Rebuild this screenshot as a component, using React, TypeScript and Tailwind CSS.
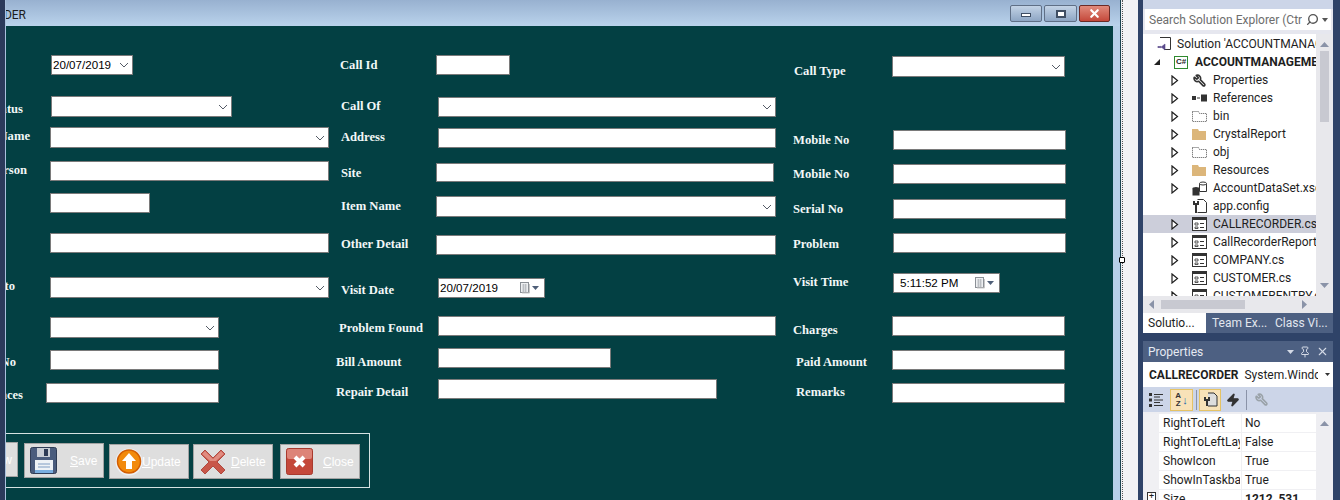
import type { ReactNode } from "react";
import { Pin, Search, Wrench, X, Zap } from "lucide-react";

const Chevron = () => (
  <svg width="10" height="6" viewBox="0 0 10 6" className="shrink-0">
    <path d="M1 1l4 4 4-4" fill="none" stroke="#555b66" strokeWidth="1" />
  </svg>
);

const CalIcon = () => (
  <svg width="21" height="12" viewBox="0 0 21 12" className="shrink-0">
    <rect x="0.5" y="0.5" width="8" height="10" fill="#eef0f2" stroke="#8b9096" />
    <path d="M2 3h5M2 5h5M2 7h5M2 9h5M3.5 2v8M5.500 2v8" stroke="#b4b8bc" strokeWidth="0.8" />
    <path d="M9.500 2v9H2" fill="none" stroke="#c8c8c8" />
    <path d="M12 4h7l-3.500 4z" fill="#4f5f78" />
  </svg>
);

function Input({ className }: { className: string }) {
  return <div className={`shrink-0 bg-white border border-[#7a7a7a] ${className}`} />;
}

function Combo({ className }: { className: string }) {
  return (
    <div className={`shrink-0 bg-white border border-[#7a7a7a] flex items-center justify-end pr-[3px] ${className}`}>
      <Chevron />
    </div>
  );
}

function DateBox({ text, className, children }: { text: string; className: string; children: ReactNode }) {
  return (
    <div className={`shrink-0 bg-white border border-[#7a7a7a] flex items-center justify-between pr-[3px] text-[11.6px] text-black font-['Liberation_Sans',sans-serif] ${className}`}>
      <span>{text}</span>
      {children}
    </div>
  );
}

function Field({ row, box, text, children }: { row: string; box: string; text: string; children: ReactNode }) {
  return (
    <div className={`flex items-start shrink-0 ${row}`}>
      <div className={`shrink-0 h-4 mb-[-20px] leading-4 whitespace-nowrap text-[12.6px] font-bold text-[#f2f7f7] font-['Liberation_Serif',serif] ${box}`}>
        {text}
      </div>
      {children}
    </div>
  );
}

function ClipLabel({ row, box, text, children }: { row: string; box: string; text: string; children: ReactNode }) {
  return (
    <div className={`flex items-start shrink-0 ${row}`}>
      <div className={`shrink-0 h-4 mb-[-20px] leading-4 flex justify-end whitespace-nowrap text-[12.6px] font-bold text-[#f2f7f7] font-['Liberation_Serif',serif] ${box}`}>
        <span className="shrink-0">{text}</span>
      </div>
      {children}
    </div>
  );
}

function ActionButton({ label, rest, icon, className, textClass }: { label: string; rest: string; icon: ReactNode; className: string; textClass: string }) {
  return (
    <div className={`shrink-0 w-[80px] h-[35px] bg-[#dedede] border border-[#a3a3a3] flex items-center text-[12px] text-white font-['Liberation_Sans',sans-serif] ${className}`}>
      {icon}
      <span className={textClass}>
        <span className="underline">{label}</span>
        {rest}
      </span>
    </div>
  );
}

const Floppy = () => (
  <svg width="27" height="27" viewBox="0 0 27 27" className="shrink-0 ml-[5px]">
    <rect x="0.5" y="0.5" width="26" height="26" rx="2" fill="#4a5c7d" stroke="#2f3c55" />
    <rect x="7" y="1" width="13" height="9" fill="#c9ced6" />
    <rect x="14" y="2" width="4" height="7" fill="#2c3a55" />
    <rect x="5" y="13" width="18" height="13" fill="#eef2f6" />
    <path d="M8 17h12M8 20h12" stroke="#7e9cc2" />
    <rect x="5" y="23" width="18" height="3" fill="#79aee0" />
  </svg>
);

const UpCircle = () => (
  <svg width="28" height="28" viewBox="0 0 28 28" className="shrink-0 ml-[5px] mr-[-1px]">
    <circle cx="14" cy="14" r="13.500" fill="#eef0f5" />
    <circle cx="14" cy="13.500" r="11.500" fill="#f28a0c" stroke="#d25e04" strokeWidth="1.500" />
    <path d="M14 5l7 8h-4v8h-6v-8H7z" fill="#fff" />
  </svg>
);

const RedX = () => (
  <svg width="26" height="26" viewBox="0 0 26 26" className="shrink-0 ml-[6px]">
    <path d="M5 1l8 8 8-8 4 4-8 8 8 8-4 4-8-8-8 8-4-4 8-8-8-8z" fill="#c8574a" stroke="#b04a40" />
    <path d="M5 2l8 8 8-8 3 3-8 7H10L2 5z" fill="#e08c80" />
  </svg>
);

const RedSquareX = () => (
  <svg width="27" height="27" viewBox="0 0 27 27" className="shrink-0 ml-[5px]">
    <rect x="0.5" y="0.5" width="26" height="26" rx="2" fill="#c4483a" stroke="#a83a2e" />
    <rect x="1" y="1" width="25" height="10" rx="2" fill="#dd8478" />
    <path d="M9 9l9 9M18 9l-9 9" stroke="#fff" strokeWidth="4" />
  </svg>
);

const Expander = () => (
  <svg width="8" height="11" viewBox="0 0 8 11" className="shrink-0">
    <path d="M1 1l5.500 4.500L1 10z" fill="#fff" stroke="#1e1e1e" strokeWidth="1.200" />
  </svg>
);

const FormFileIcon = () => (
  <svg width="15" height="14" viewBox="0 0 15 14" className="shrink-0">
    <rect x="0.5" y="0.5" width="14" height="13" fill="#fff" stroke="#333" />
    <rect x="1" y="1" width="13" height="2" fill="#333" />
    <path d="M3 6h3v2H3zM3 10h3v1.500H3z" fill="none" stroke="#333" strokeWidth="0.8" />
    <path d="M8 6.500h4M8 10.500h4" stroke="#333" />
  </svg>
);

const FolderIcon = () => (
  <svg width="15" height="12" viewBox="0 0 15 12" className="shrink-0">
    <path d="M0 1h6l1 2h7v9H0z" fill="#dcb67a" />
  </svg>
);

const DottedFolder = () => (
  <svg width="15" height="12" viewBox="0 0 15 12" className="shrink-0">
    <path d="M0.500 1.500h6l1 2h7v8H0.500z" fill="#fff" stroke="#555" strokeDasharray="1 1" />
  </svg>
);

const RefIcon = () => (
  <svg width="15" height="8" viewBox="0 0 15 8" className="shrink-0">
    <rect x="0" y="2" width="4" height="4" fill="#333" />
    <path d="M5 4h3" stroke="#333" />
    <rect x="9" y="0.5" width="6" height="7" fill="#333" />
  </svg>
);

const DataIcon = () => (
  <svg width="15" height="15" viewBox="0 0 15 15" className="shrink-0">
    <ellipse cx="4" cy="7.500" rx="3.500" ry="1.500" fill="#333" />
    <rect x="0.5" y="7.500" width="7" height="7" fill="#333" />
    <path d="M7.500 2.500v8h7v-8" fill="#fff" stroke="#333" />
    <ellipse cx="11" cy="2.500" rx="3.500" ry="1.500" fill="#fff" stroke="#333" />
  </svg>
);

const ConfigIcon = () => (
  <svg width="15" height="15" viewBox="0 0 15 15" className="shrink-0">
    <path d="M5.500 0.500h6l3 3v10h-9" fill="#fff" stroke="#333" />
    <path d="M1 2v4h2v8h2V6h2V2H5v2H3V2z" fill="#333" />
  </svg>
);

const tree = [
  { name: "Properties", icon: <Wrench size={13} strokeWidth={3} className="text-[#333] shrink-0 mx-[1px] -scale-x-100" /> },
  { name: "References", icon: <RefIcon /> },
  { name: "bin", icon: <DottedFolder /> },
  { name: "CrystalReport", icon: <FolderIcon /> },
  { name: "obj", icon: <DottedFolder /> },
  { name: "Resources", icon: <FolderIcon /> },
  { name: "AccountDataSet.xsd", icon: <DataIcon /> },
  { name: "app.config", icon: <ConfigIcon />, noArrow: true },
  { name: "CALLRECORDER.cs", icon: <FormFileIcon />, selected: true },
  { name: "CallRecorderReport.rpt", icon: <FormFileIcon /> },
  { name: "COMPANY.cs", icon: <FormFileIcon /> },
  { name: "CUSTOMER.cs", icon: <FormFileIcon /> },
  { name: "CUSTOMERENTRY.cs", icon: <FormFileIcon /> },
];

const props = [
  { name: "RightToLeft", value: "No" },
  { name: "RightToLeftLayout", value: "False" },
  { name: "ShowIcon", value: "True" },
  { name: "ShowInTaskbar", value: "True" },
];

export default function App() {
  return (
    <div className="flex w-[1340px] h-[500px] overflow-hidden bg-[#eeeef2]">
      <div className="w-[6px] shrink-0 bg-[#2b3a5b] border-r border-[#a9c0dc]" />

      {/* form designer window */}
      <div className="w-[1114px] shrink-0 flex flex-col">
        <div className="h-[26px] shrink-0 flex items-center justify-between bg-gradient-to-b from-[#98b1d0] to-[#bad3ec] pr-[10px]">
          <div className="w-[20px] mt-[4px] flex justify-end overflow-hidden text-[12px] text-[#1c1c1c] font-['Roboto',sans-serif]">
            <span className="shrink-0">CALLRECORDER</span>
          </div>
          <div className="flex gap-[2px] mt-[1px]">
            <div className="w-[32px] h-[17px] rounded-[2px] border border-[#5f6f86] bg-gradient-to-b from-[#c3d3e6] to-[#8ea6c4] flex items-center justify-center">
              <div className="w-[10px] h-[4px] mt-[3px] bg-white border border-[#3f4e63]" />
            </div>
            <div className="w-[33px] h-[17px] rounded-[2px] border border-[#5f6f86] bg-gradient-to-b from-[#c3d3e6] to-[#8ea6c4] flex items-center justify-center">
              <div className="w-[10px] h-[8px] bg-white border-2 border-[#3f4e63]" />
            </div>
            <div className="w-[31px] h-[17px] rounded-[2px] border border-[#6b2a26] bg-gradient-to-b from-[#e08a7c] to-[#c4473a] flex items-center justify-center">
              <X size={13} strokeWidth={4} className="text-white" />
            </div>
          </div>
        </div>

        <div className="flex-1 flex min-h-0">
          <div className="w-[1107px] shrink-0 bg-[#034043] flex overflow-hidden">
            <div className="w-[330px] shrink-0 flex flex-col">
              <div className="flex shrink-0 mt-[29px] ml-[45px]">
                <DateBox text="20/07/2019" className="w-[82px] h-[20px] pl-[1px]">
                  <Chevron />
                </DateBox>
              </div>
              <ClipLabel row="mt-[21px]" box="w-[17px] mt-[5px]" text="Status">
                <Combo className="ml-[28px] w-[181px] h-[21px]" />
              </ClipLabel>
              <ClipLabel row="mt-[10px]" box="w-[24px] mt-[1px]" text="Customer Name">
                <Combo className="ml-[20px] w-[279px] h-[21px]" />
              </ClipLabel>
              <ClipLabel row="mt-[13px]" box="w-[21px] mt-[1px]" text="Contact Person">
                <Input className="ml-[23px] w-[279px] h-[20px]" />
              </ClipLabel>
              <Input className="mt-[12px] ml-[44px] w-[100px] h-[20px]" />
              <Input className="mt-[20px] ml-[44px] w-[279px] h-[20px]" />
              <ClipLabel row="mt-[24px]" box="w-[9px] mt-[1px]" text="Assign to">
                <Combo className="ml-[35px] w-[279px] h-[21px]" />
              </ClipLabel>
              <Combo className="mt-[19px] ml-[44px] w-[169px] h-[21px]" />
              <ClipLabel row="mt-[12px]" box="w-[10px] mt-[4px]" text="Bill No">
                <Input className="ml-[34px] w-[169px] h-[20px]" />
              </ClipLabel>
              <ClipLabel row="mt-[13px]" box="w-[17px] mt-[4px]" text="Advances">
                <Input className="ml-[23px] w-[173px] h-[20px]" />
              </ClipLabel>

              <div className="shrink-0 mt-[30px] ml-[-76px] w-[440px] h-[55px] border border-[#d6e2e2] flex items-start pl-[7px]">
                <ActionButton label="N" rest="ew" icon={null} className="mt-[8px] justify-end pr-[5px]" textClass="" />
                <ActionButton label="S" rest="ave" icon={<Floppy />} className="mt-[9px] ml-[6px]" textClass="ml-[13px]" />
                <ActionButton label="U" rest="pdate" icon={<UpCircle />} className="mt-[10px] ml-[5px]" textClass="" />
                <ActionButton label="D" rest="elete" icon={<RedX />} className="mt-[10px] ml-[4px]" textClass="ml-[5px]" />
                <ActionButton label="C" rest="lose" icon={<RedSquareX />} className="mt-[10px] ml-[7px]" textClass="ml-[10px]" />
              </div>
            </div>

            <div className="w-[457px] shrink-0 flex flex-col">
              <Field row="mt-[29px]" box="w-[100px] pl-[4px] mt-[2px]" text="Call Id">
                <Input className="w-[74px] h-[20px]" />
              </Field>
              <Field row="mt-[22px]" box="w-[102px] pl-[5px] mt-[1px]" text="Call Of">
                <Combo className="w-[338px] h-[20px]" />
              </Field>
              <Field row="mt-[11px]" box="w-[102px] pl-[5px] mt-[1px]" text="Address">
                <Input className="w-[338px] h-[20px]" />
              </Field>
              <Field row="mt-[15px]" box="w-[100px] pl-[5px] mt-[2px]" text="Site">
                <Input className="w-[338px] h-[19px]" />
              </Field>
              <Field row="mt-[14px]" box="w-[100px] pl-[5px] mt-[2px]" text="Item Name">
                <Combo className="w-[340px] h-[21px]" />
              </Field>
              <Field row="mt-[18px]" box="w-[100px] pl-[5px] mt-[1px]" text="Other Detail">
                <Input className="w-[340px] h-[20px]" />
              </Field>
              <Field row="mt-[23px]" box="w-[102px] pl-[5px] mt-[4px]" text="Visit Date">
                <DateBox text="20/07/2019" className="w-[107px] h-[20px] pl-[1px]">
                  <CalIcon />
                </DateBox>
              </Field>
              <Field row="mt-[18px]" box="w-[102px] pl-[3px] mt-[4px]" text="Problem Found">
                <Input className="w-[338px] h-[20px]" />
              </Field>
              <Field row="mt-[12px]" box="w-[102px] mt-[6px]" text="Bill Amount">
                <Input className="w-[173px] h-[20px]" />
              </Field>
              <Field row="mt-[11px]" box="w-[102px] mt-[5px]" text="Repair Detail">
                <Input className="w-[279px] h-[20px]" />
              </Field>
            </div>

            <div className="flex-1 flex flex-col">
              <Field row="mt-[30px]" box="w-[99px] pl-[1px] mt-[7px]" text="Call Type">
                <Combo className="w-[173px] h-[21px]" />
              </Field>
              <Field row="mt-[53px]" box="w-[100px] mt-[2px]" text="Mobile No">
                <Input className="w-[173px] h-[20px]" />
              </Field>
              <Field row="mt-[14px]" box="w-[100px] mt-[2px]" text="Mobile No">
                <Input className="w-[173px] h-[20px]" />
              </Field>
              <Field row="mt-[15px]" box="w-[100px] mt-[2px]" text="Serial No">
                <Input className="w-[173px] h-[20px]" />
              </Field>
              <Field row="mt-[14px]" box="w-[100px] mt-[3px]" text="Problem">
                <Input className="w-[173px] h-[20px]" />
              </Field>
              <Field row="mt-[20px]" box="w-[100px] mt-[1px]" text="Visit Time">
                <DateBox text="5:11:52 PM" className="w-[107px] h-[20px] pl-[6px]">
                  <CalIcon />
                </DateBox>
              </Field>
              <Field row="mt-[23px]" box="w-[99px] mt-[6px]" text="Charges">
                <Input className="w-[173px] h-[20px]" />
              </Field>
              <Field row="mt-[14px]" box="w-[99px] pl-[3px] mt-[4px]" text="Paid Amount">
                <Input className="w-[173px] h-[20px]" />
              </Field>
              <Field row="mt-[13px]" box="w-[99px] pl-[3px] mt-[1px]" text="Remarks">
                <Input className="w-[173px] h-[20px]" />
              </Field>
            </div>
          </div>
          <div className="flex-1 bg-[#b6cfe8]" />
        </div>
      </div>

      {/* designer gutter */}
      <div className="relative w-[23px] shrink-0 flex">
        <div className="w-[1px] bg-[#1d4350]" />
        <div className="w-[16px] border-l border-dotted border-[#555] ml-[1px] bg-[#f2f2f5]" />
        <div className="flex-1 bg-[#2f4368]" />
        <div className="absolute left-[-1px] top-[257px] w-[6px] h-[6px] bg-white border border-black rounded-[1px]" />
      </div>

      {/* tool windows */}
      <div className="flex-1 flex flex-col bg-[#2f4368] pr-[7px] font-['Roboto',sans-serif] text-[12px] text-[#1e1e1e]">
        <div className="h-[333px] shrink-0 flex flex-col bg-[#e6e7ef]">
          <div className="h-[9px] shrink-0 bg-[#ccd5e8]" />
          <div className="h-[21px] shrink-0 mx-[2px] bg-white flex items-center justify-between pl-[4px] pr-[3px] text-[#6d6d6d] overflow-hidden">
            <span className="whitespace-nowrap w-[153px] overflow-hidden">Search Solution Explorer (Ctrl+;)</span>
            <div className="flex items-center gap-[3px] text-[#555]">
              <Search size={13} strokeWidth={2.5} className="-scale-x-100" />
              <svg width="6" height="4" viewBox="0 0 6 4"><path d="M0 0h6L3 4z" fill="#555" /></svg>
            </div>
          </div>
          <div className="flex-1 flex min-h-0 mt-[4px]">
            <div className="w-[173px] shrink-0 bg-white overflow-hidden pt-[1px] flex flex-col">
              <div className="h-[18px] shrink-0 flex items-center pl-[14px] whitespace-nowrap">
                <svg width="14" height="14" viewBox="0 0 14 14" className="shrink-0">
                  <path d="M3 0.500h10.500v12H7" fill="none" stroke="#333" />
                  <path d="M1 9l2 2 5-4v6l-5-4-2 2z" fill="#5a4a8c" stroke="#5a4a8c" strokeWidth="0.6" />
                </svg>
                <span className="ml-[6px]">Solution 'ACCOUNTMANAGEMENT'</span>
              </div>
              <div className="h-[18px] shrink-0 flex items-center pl-[11px] whitespace-nowrap">
                <svg width="6" height="6" viewBox="0 0 6 6" className="shrink-0"><path d="M6 0v6H0z" fill="#222" /></svg>
                <div className="ml-[14px] w-[14px] h-[13px] border border-[#2f8a2f] flex items-center justify-center text-[8px] font-bold leading-none font-['Liberation_Sans',sans-serif] shrink-0">C#</div>
                <span className="ml-[7px] font-bold">ACCOUNTMANAGEMENT</span>
              </div>
              {tree.map((it) => (
                <div key={it.name} className={`h-[18px] shrink-0 flex items-center pl-[28px] whitespace-nowrap ${it.selected ? "bg-[#ccceda]" : ""}`}>
                  <div className="w-[8px] shrink-0 flex">{it.noArrow ? null : <Expander />}</div>
                  <div className="w-[15px] ml-[13px] shrink-0 flex justify-center">{it.icon}</div>
                  <span className="ml-[6px]">{it.name}</span>
                </div>
              ))}
            </div>
            <div className="flex-1 flex flex-col items-center bg-[#e8e8ec] pt-[8px] pb-[8px]">
              <svg width="9" height="5" viewBox="0 0 9 5"><path d="M0 5l4.500-5L9 5z" fill="#8a93a8" /></svg>
              <div className="w-[9px] h-[71px] mt-[4px] bg-[#c8c9d1]" />
              <div className="flex-1" />
              <svg width="9" height="5" viewBox="0 0 9 5"><path d="M0 0l4.500 5L9 0z" fill="#8a93a8" /></svg>
            </div>
          </div>
          <div className="h-[17px] shrink-0 flex items-center bg-[#e8e8ec] px-[6px]">
            <svg width="5" height="9" viewBox="0 0 5 9"><path d="M5 0v9L0 4.500z" fill="#8a93a8" /></svg>
            <div className="w-[84px] h-[9px] ml-[7px] bg-[#c8c9d1]" />
            <div className="flex-1" />
            <svg width="5" height="9" viewBox="0 0 5 9" className="mr-[20px]"><path d="M0 0v9l5-4.500z" fill="#8a93a8" /></svg>
          </div>
          <div className="h-[20px] shrink-0 flex bg-[#4d6082] text-[#e2e6ee] whitespace-nowrap">
            <div className="w-[63px] bg-white text-[#1e1e1e] pl-[5px] leading-[20px]">Solutio...</div>
            <div className="ml-[6px] w-[63px] leading-[20px]">Team Ex...</div>
            <div className="leading-[20px]">Class Vi...</div>
          </div>
        </div>

        <div className="h-[8px] shrink-0" />

        <div className="flex-1 min-h-0 flex flex-col bg-[#eeeef2] overflow-hidden">
          <div className="h-[21px] shrink-0 bg-[#4d6082] flex items-center justify-between pl-[5px] pr-[4px] text-[#e6eaf2]">
            <span>Properties</span>
            <div className="flex items-center gap-[5px]">
              <svg width="7" height="4" viewBox="0 0 7 4"><path d="M0 0h7L3.500 4z" fill="#d4dae6" /></svg>
              <Pin size={12} strokeWidth={2} className="text-[#d4dae6]" />
              <X size={13} strokeWidth={2} className="text-[#d4dae6]" />
            </div>
          </div>
          <div className="h-[25px] shrink-0 bg-white flex items-center pl-[6px] pr-[3px] whitespace-nowrap">
            <span className="font-bold">CALLRECORDER</span>
            <span className="ml-[6px] w-[74px] overflow-hidden">System.Windows.Forms.Form</span>
            <svg width="5" height="3" viewBox="0 0 5 3" className="ml-auto"><path d="M0 0h5L2.500 3z" fill="#333" /></svg>
          </div>
          <div className="h-[25px] shrink-0 bg-[#ccd5e8] flex items-center pl-[2px]">
            <div className="w-[22px] h-[22px] flex items-center justify-center">
              <svg width="14" height="14" viewBox="0 0 14 14">
                <path d="M0 0h3v3H0zM0 5.500h3v3H0zM0 11h3v3H0z" fill="#333" />
                <path d="M5 1.500h9M5 4h6M5 7h9M5 9.500h6M5 12.500h9" stroke="#333" />
              </svg>
            </div>
            <div className="w-[23px] h-[22px] ml-[3px] bg-[#f8e2b8] border border-[#e5c365] flex items-center justify-center text-[8px] font-bold leading-[8px] text-[#333] font-['Liberation_Sans',sans-serif]">
              <span className="text-center">A<br />Z</span>
              <span className="ml-[1px] text-[11px] text-[#1e62a8]">↓</span>
            </div>
            <div className="w-[1px] h-[20px] ml-[3px] bg-[#8a93a8]" />
            <div className="w-[22px] h-[22px] ml-[2px] bg-[#f8e2b8] border border-[#e5c365] flex items-center justify-center">
              <svg width="15" height="15" viewBox="0 0 15 15"><path d="M5 1h6l3 3v10H5" fill="#ddd" stroke="#333" /><path d="M1 5v4h2v5h2V9h2V5H5v2H3V5z" fill="#333" /></svg>
            </div>
            <Zap size={14} fill="#333" className="ml-[5px] text-[#333]" />
            <div className="w-[1px] h-[20px] ml-[6px] bg-[#8a93a8]" />
            <Wrench size={13} strokeWidth={3} className="ml-[8px] text-[#9aa2a8] -scale-x-100" />
          </div>
          <div className="flex-1 min-h-0 flex mt-[2px] pl-[2px]">
            <div className="w-[171px] shrink-0 flex flex-col bg-[#f0f0f3] pl-[14px] gap-[1px]">
              {props.map((p) => (
                <div key={p.name} className="h-[18px] shrink-0 flex bg-white whitespace-nowrap leading-[18px]">
                  <div className="w-[81px] shrink-0 pl-[4px] overflow-hidden">{p.name}</div>
                  <div className="ml-[1px] flex-1 pl-[3px] border-l border-[#f0f0f3]">{p.value}</div>
                </div>
              ))}
              <div className="relative h-[18px] shrink-0 flex bg-white whitespace-nowrap leading-[18px]">
                <div className="absolute left-[-12px] top-[2px] w-[9px] h-[9px] border border-[#333] bg-white flex items-center justify-center text-[9px] leading-none">+</div>
                <div className="w-[81px] shrink-0 pl-[4px]">Size</div>
                <div className="ml-[1px] flex-1 pl-[3px] font-bold border-l border-[#f0f0f3]">1212, 531</div>
              </div>
            </div>
            <div className="flex-1 flex justify-center pt-[7px] bg-[#eeeef2]">
              <svg width="9" height="5" viewBox="0 0 9 5"><path d="M0 5l4.500-5L9 5z" fill="#8a93a8" /></svg>
            </div>
          </div>
        </div>
      </div>
    </div>
  );
}
